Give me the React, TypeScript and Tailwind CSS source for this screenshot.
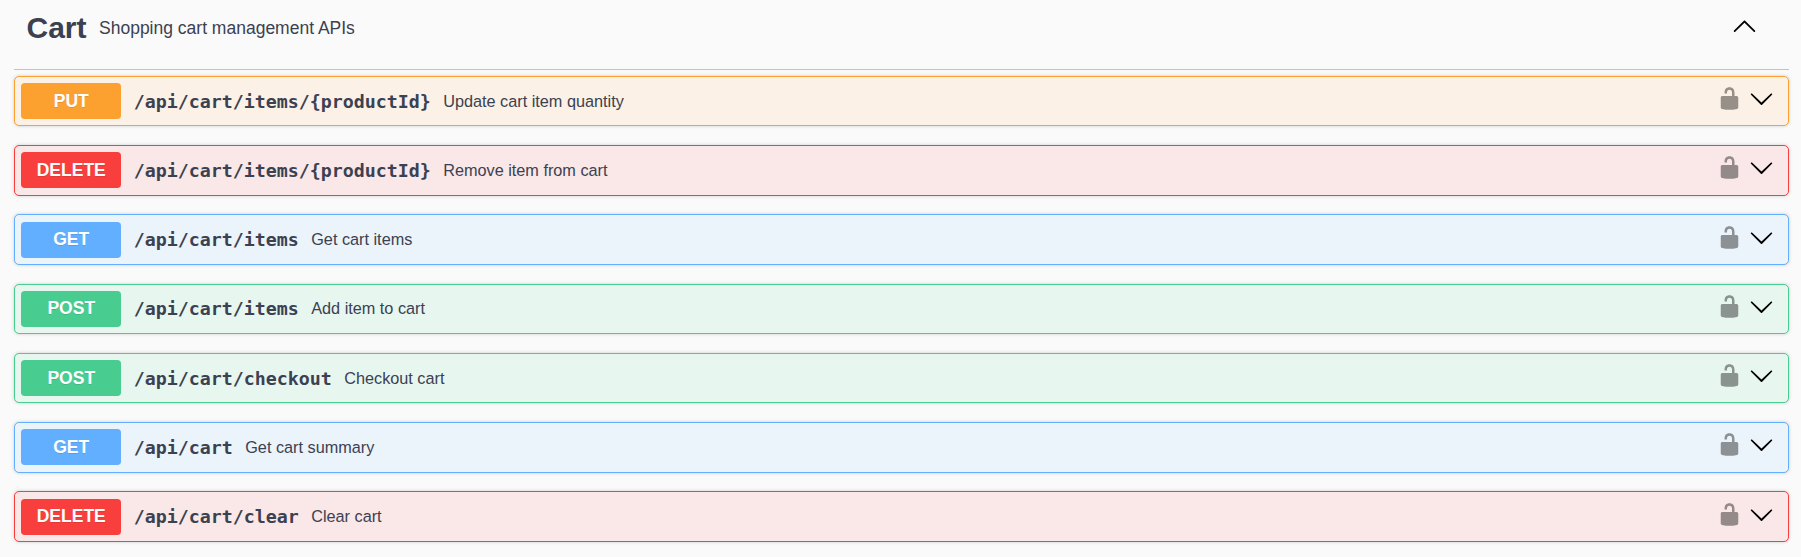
type Method = 'PUT' | 'DELETE' | 'GET' | 'POST';

const operations: { method: Method; path: string; summary: string }[] = [
  { method: 'PUT', path: '/api/cart/items/{productId}', summary: 'Update cart item quantity' },
  { method: 'DELETE', path: '/api/cart/items/{productId}', summary: 'Remove item from cart' },
  { method: 'GET', path: '/api/cart/items', summary: 'Get cart items' },
  { method: 'POST', path: '/api/cart/items', summary: 'Add item to cart' },
  { method: 'POST', path: '/api/cart/checkout', summary: 'Checkout cart' },
  { method: 'GET', path: '/api/cart', summary: 'Get cart summary' },
  { method: 'DELETE', path: '/api/cart/clear', summary: 'Clear cart' },
];

const blockStyles: Record<Method, string> = {
  PUT: 'border-[#fca130] bg-[#fbf1e6]',
  DELETE: 'border-[#f93e3e] bg-[#fae7e7]',
  GET: 'border-[#61affe] bg-[#ebf3fb]',
  POST: 'border-[#49cc90] bg-[#e8f6f0]',
};

const badgeStyles: Record<Method, string> = {
  PUT: 'bg-[#fca130]',
  DELETE: 'bg-[#f93e3e]',
  GET: 'bg-[#61affe]',
  POST: 'bg-[#49cc90]',
};

function ArrowUp() {
  return (
    <svg viewBox="0 0 20 20" className="size-[25px] shrink-0" fill="black">
      <path d="M 17.418 14.908 C 17.69 15.176 18.127 15.176 18.397 14.908 C 18.667 14.64 18.668 14.207 18.397 13.939 L 10.489 6.109 C 10.219 5.841 9.782 5.841 9.51 6.109 L 1.602 13.939 C 1.332 14.207 1.332 14.64 1.602 14.908 C 1.873 15.176 2.311 15.176 2.581 14.908 L 10 7.767 L 17.418 14.908 Z" />
    </svg>
  );
}

function ArrowDown() {
  return (
    <svg viewBox="0 0 20 20" className="size-[25px] shrink-0" fill="black">
      <path d="M17.418 6.109c.272-.268.709-.268.979 0s.271.701 0 .969l-7.908 7.83c-.27.268-.707.268-.979 0l-7.908-7.83c-.27-.268-.27-.701 0-.969.271-.268.709-.268.979 0L10 13.25l7.418-7.141z" />
    </svg>
  );
}

function Unlocked() {
  return (
    <svg viewBox="0 0 20 20" className="size-[25px] shrink-0 opacity-40" fill="black">
      <path d="M15.8 8H14V5.6C14 2.703 12.665 1 10 1 7.334 1 6 2.703 6 5.6V6h2v-.801C8 3.754 8.797 3 10 3c1.203 0 2 .754 2 2.199V8H4c-.553 0-1 .646-1 1.199V17c0 .549.428 1.139.951 1.307l1.197.387C5.672 18.861 6.55 19 7.1 19h5.8c.549 0 1.428-.139 1.951-.307l1.196-.387c.524-.167.953-.757.953-1.306V9.199C17 8.646 16.352 8 15.8 8z" />
    </svg>
  );
}

export default function App() {
  return (
    <main className="h-[557px] overflow-hidden bg-[#fafafa] pr-[12px] pl-[14px] font-['Liberation_Sans',Arial,sans-serif] text-[#3b4151]">
      <header className="flex h-[70px] items-start border-b border-[#3b4151]/30 pr-[32px] pl-[12.5px]">
        <h3 className="pt-[11px] text-[30px] leading-[34px] font-bold">Cart</h3>
        <p className="flex-1 pt-[18px] pl-[12.5px] text-[17.5px] leading-[20px]">Shopping cart management APIs</p>
        <div className="pt-[13px]">
          <ArrowUp />
        </div>
      </header>
      <section className="pt-[6.02px]">
        {operations.map(({ method, path, summary }) => (
          <div
            key={`${method} ${path}`}
            className={`mb-[18.75px] flex h-[50.47px] items-start rounded-[5px] border p-[6.25px] shadow-[0_0_3.75px_rgba(0,0,0,0.19)] ${blockStyles[method]}`}
          >
            <span
              className={`h-[36px] w-[100px] shrink-0 rounded-[3.75px] pt-[7.5px] text-center text-[17.5px] leading-[20px] font-bold text-white [text-shadow:0_1px_0_rgba(0,0,0,0.1)] ${badgeStyles[method]}`}
            >
              {method}
            </span>
            <span className="pt-[7.5px] pl-[12.5px] font-['DejaVu_Sans_Mono',monospace] text-[18.27px] leading-[22px] font-bold">
              {path}
            </span>
            <span className="flex-1 pt-[7.5px] pl-[12.5px] text-[16.25px] leading-[20px]">{summary}</span>
            <div className="flex gap-[7.5px] pt-[3px] pr-[7.5px]">
              <Unlocked />
              <ArrowDown />
            </div>
          </div>
        ))}
      </section>
    </main>
  );
}
